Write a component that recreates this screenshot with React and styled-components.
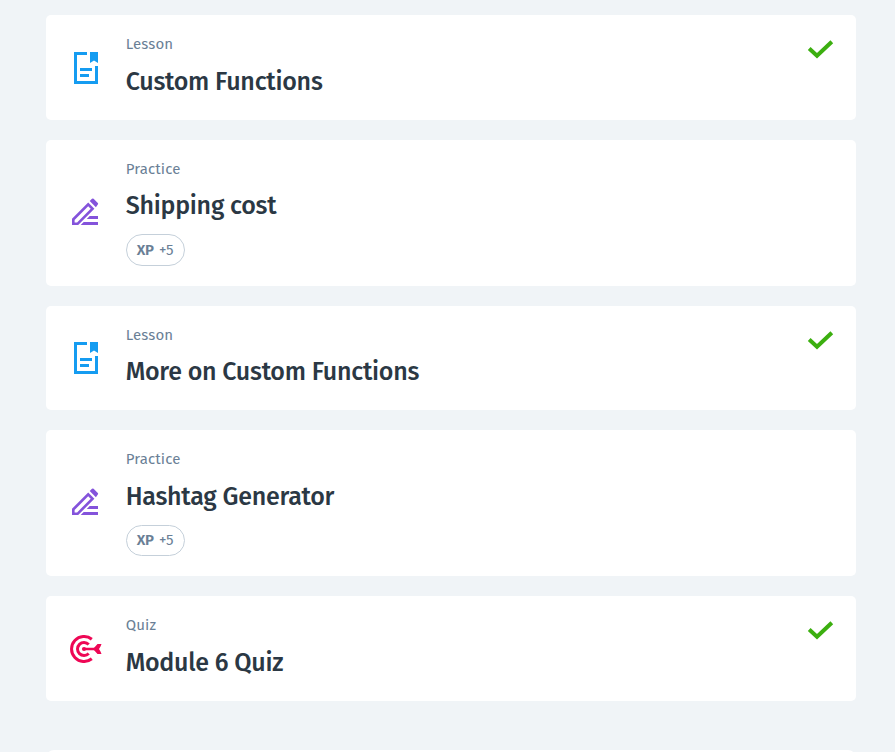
import React from "react";
import styled, { createGlobalStyle } from "styled-components";

const GlobalStyle = createGlobalStyle`
  * { box-sizing: border-box; }
  body {
    margin: 0;
    height: 752px;
    overflow: hidden;
    background: #f0f4f7;
    font-family: "Fira Sans", "Noto Sans", sans-serif;
  }
`;

const List = styled.main`
  height: 752px;
  overflow: hidden;
  padding: 15px 39px 0 46px;
  display: flex;
  flex-direction: column;
  gap: 20px;
`;

const Card = styled.article`
  flex: none;
  display: flex;
  height: ${(p) => (p.$tall ? 146 : 104.5)}px;
  padding-right: 22px;
  background: #fff;
  border-radius: 5px;
`;

const IconColumn = styled.div`
  width: 79.7px;
  display: flex;
  align-items: center;
  justify-content: center;
  padding-top: ${(p) => (p.$tall ? 0 : 1)}px;
  padding-bottom: ${(p) => (p.$tall ? 2 : 0)}px;
  svg { display: block; }
`;

const Content = styled.div`
  flex: 1;
  padding-top: 19px;
`;

const Kind = styled.div`
  height: 20px;
  font-size: 15px;
  line-height: 20px;
  letter-spacing: 0.15px;
  color: #6a7f96;
`;

const Title = styled.h2`
  margin: 10.8px 0 0;
  height: 35px;
  font-size: 25px;
  line-height: 35px;
  font-weight: 500;
  letter-spacing: -0.25px;
  color: #2b3844;
  white-space: nowrap;
`;

const Badge = styled.div`
  display: flex;
  align-items: center;
  gap: 5px;
  width: 59px;
  height: 31.4px;
  margin-top: 10px;
  padding-left: 10px;
  border: 1px solid #c5d0da;
  border-radius: 16px;
  color: #6a7f96;
  font-size: 15px;
  line-height: 20px;
  letter-spacing: -0.15px;
  b { font-weight: 600; }
`;

const Status = styled.div`
  padding-top: 24px;
  svg { display: block; }
`;

const NextCard = styled.div`
  flex: none;
  height: 80px;
  margin-top: 29px;
  background: #fff;
  border-radius: 8px;
`;

const LessonIcon = () => (
  <svg width="24" height="32" viewBox="0 0 24 32" fill="#159cf1">
    <path d="M0 0H13V3H3V29H21V14H24V32H0Z" />
    <path d="M16 0H24V11L20 8.5L16 11Z" />
    <path d="M6 16H18V19H6ZM6 22H15V25H6Z" />
  </svg>
);

const PracticeIcon = () => (
  <svg width="28" height="28" viewBox="0.5 0 28 28" fill="#8453db">
    <path
      fillRule="evenodd"
      d="M0.5 27V20.8L16.7 4.6L22.9 10.8L6.7 27ZM3.1 24.4H5.6L19.2 10.8L16.7 8.3L3.1 21.9Z"
    />
    <path d="M18.2 3.1L20.5 .8Q21.3 0 22.1 .8L26.3 5Q27.1 5.8 26.3 6.6L24.4 9.3Z" />
    <path d="M18.2 18H26.5V21H15.2ZM12.2 24H26.5V27H9.2Z" />
  </svg>
);

const QuizIcon = () => (
  <svg width="32" height="28" viewBox="0 0 32 28" fill="none" stroke="#ee0755">
    <path d="M21.8 4.2A12.5 12.5 0 1 0 21.8 23.8" strokeWidth="3" />
    <path d="M18.7 9.5A6.5 6.5 0 1 0 18.7 18.5" strokeWidth="3" />
    <path d="M14 14H27" strokeWidth="2.5" />
    <circle cx="14" cy="14" r="2.1" fill="#ee0755" stroke="none" />
    <path d="M23 14L27.5 9H31.5L30.5 11.5L29 14L30.5 16.5L31.5 19H27.5Z" fill="#ee0755" stroke="none" />
  </svg>
);

const CheckIcon = () => (
  <svg width="27" height="22" viewBox="0 0 27 22" fill="none" stroke="#3caf10" strokeWidth="4">
    <path d="M2.2 9.5L10 16.8L24.8 2.8" />
  </svg>
);

const icons = { Lesson: LessonIcon, Practice: PracticeIcon, Quiz: QuizIcon };

const items = [
  { kind: "Lesson", title: "Custom Functions", done: true },
  { kind: "Practice", title: "Shipping cost", xp: 5 },
  { kind: "Lesson", title: "More on Custom Functions", done: true },
  { kind: "Practice", title: "Hashtag Generator", xp: 5 },
  { kind: "Quiz", title: "Module 6 Quiz", done: true },
];

export default function App() {
  return (
    <>
      <GlobalStyle />
      <List>
        {items.map(({ kind, title, done, xp }) => {
          const Icon = icons[kind];
          return (
            <Card key={title} $tall={!!xp}>
              <IconColumn $tall={!!xp}><Icon /></IconColumn>
              <Content>
                <Kind>{kind}</Kind>
                <Title>{title}</Title>
                {xp && <Badge><b>XP</b><span>+{xp}</span></Badge>}
              </Content>
              {done && <Status><CheckIcon /></Status>}
            </Card>
          );
        })}
        <NextCard />
      </List>
    </>
  );
}
